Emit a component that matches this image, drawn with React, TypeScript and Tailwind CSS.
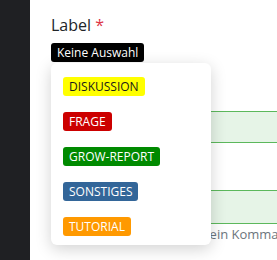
import { FC } from 'react';

const tags = [
  { name: 'DISKUSSION', cls: 'bg-[#ffff00] text-[#1a1a1a]' },
  { name: 'FRAGE', cls: 'bg-[#cc0000] text-white' },
  { name: 'GROW-REPORT', cls: 'bg-[#008a00] text-white' },
  { name: 'SONSTIGES', cls: 'bg-[#336699] text-white' },
  { name: 'TUTORIAL', cls: 'bg-[#ff9900] text-white' },
];

const App: FC = () => {
  return (
    <div
      className="flex w-[277px] h-[260px] overflow-hidden bg-white"
      style={{ fontFamily: '"Open Sans", "Noto Sans", sans-serif' }}
    >
      {/* sidebar */}
      <div className="w-[30px] shrink-0 bg-[#1f2023]" />

      <div className="relative flex-1 pl-[21px] pt-[14px]">
        <div className="flex flex-col w-[400px]">
          <label className="text-[16px] leading-[22px] text-[#212529]">
            Label <span className="text-[#dc3545]">*</span>
          </label>
          <div className="mt-[7px] flex">
            <span className="rounded-[3px] bg-black px-[6px] text-[12px] leading-[19px] text-white">
              Keine Auswahl
            </span>
          </div>

          {/* fields behind the dropdown */}
          <div className="mt-[49px] h-[32px] border-y border-[#5cb85c] bg-[#e6f4e7]" />
          <div className="mt-[47px] h-[34px] border-y border-[#5cb85c] bg-[#e6f4e7]" />
          <p className="mt-px pl-[2px] text-[13px] leading-[18px] text-[#6c757d]">
            Mehrere Tags bitte durch ein Komma
          </p>
        </div>

        {/* dropdown */}
        <div className="absolute left-[21px] top-[63px] w-[160px] rounded-md bg-white pt-1.5 pb-px shadow-[0_4px_16px_rgba(0,0,0,0.18)]">
          {tags.map(t => (
            <div key={t.name} className="flex px-3 py-2">
              <span className={`rounded-[3px] px-[6px] text-[12px] leading-[19px] ${t.cls}`}>
                {t.name}
              </span>
            </div>
          ))}
        </div>
      </div>
    </div>
  );
};

export default App;
